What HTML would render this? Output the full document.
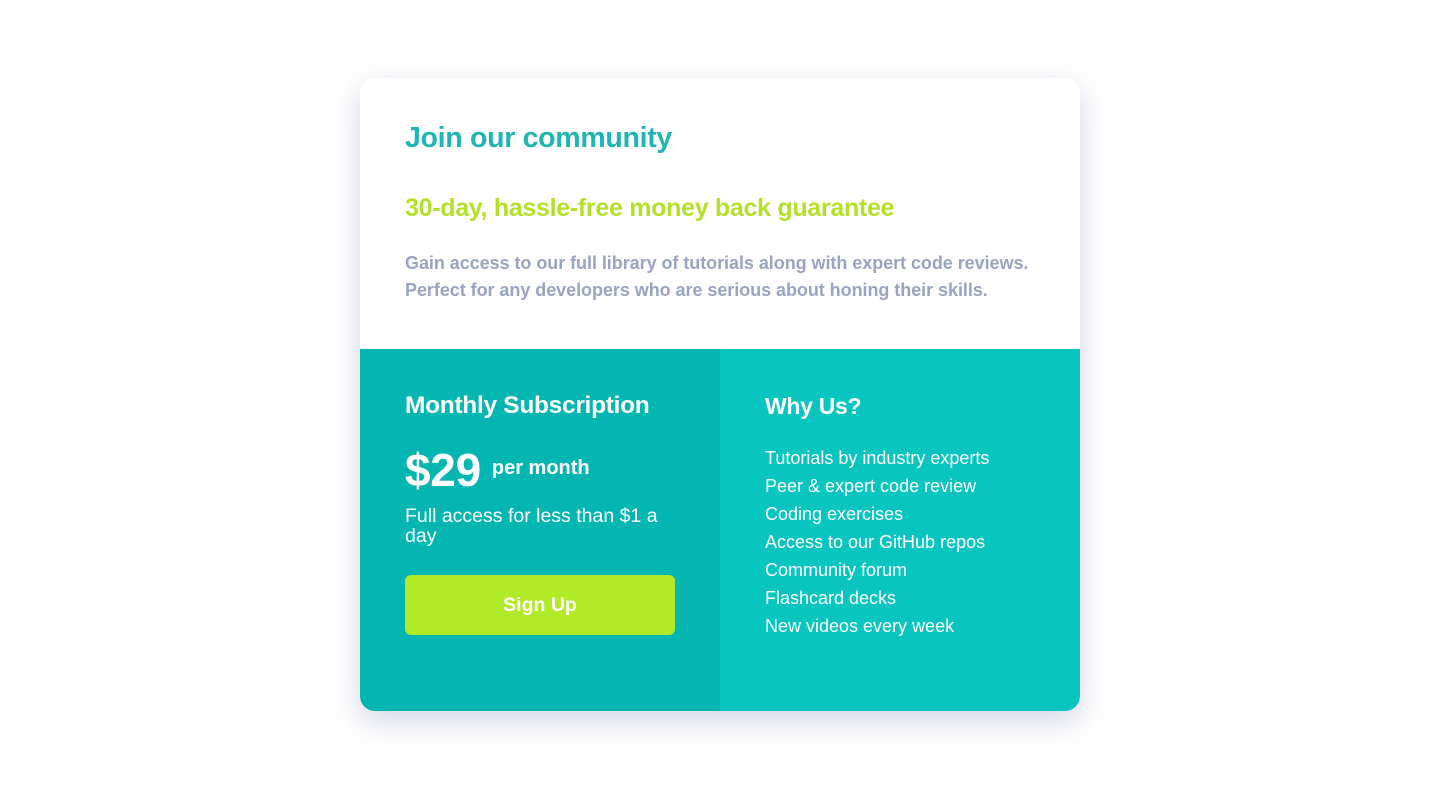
<!DOCTYPE html>
<html><head><meta charset="utf-8"><style>
*{margin:0;padding:0;box-sizing:border-box}
body{width:1440px;height:789px;background:#fff;font-family:"Liberation Sans",sans-serif;position:relative;overflow:hidden}
.card{position:absolute;left:360px;top:78px;width:720px;height:633px;border-radius:15px;overflow:hidden;box-shadow:0 10px 30px rgba(75,92,154,0.25);background:#fff}
.top{height:271px;padding:44px 45px 0}
h1{color:#1fb5b1;font-size:28.5px;font-weight:bold;letter-spacing:-0.3px;line-height:32px}
h2{color:#b2e128;font-size:25px;font-weight:bold;margin-top:40px;letter-spacing:-0.3px;line-height:28px}
p.d{color:#98a4c0;font-size:18px;font-weight:bold;line-height:27px;margin-top:28px;letter-spacing:-0.05px;white-space:nowrap}
.bot{display:flex;height:362px;color:#fff}
.l{width:360px;background:#03b6b1;padding:42px 45px}
.r{width:360px;background:#08c5c0;padding:42px 45px}
h3{font-size:24.5px;font-weight:bold;line-height:30px;letter-spacing:-0.3px}
.r h3{font-size:23px}
.price{margin-top:26px;display:flex;align-items:center;height:46px}
.price b{font-size:46px;letter-spacing:-0.3px;line-height:46px}
.price span{font-size:20px;font-weight:bold;margin-left:11px;margin-bottom:4px}
.fa{font-size:19.5px;line-height:20px;margin-top:13px;width:270px}
.btn{margin-top:29px;width:270px;height:60px;background:#b1ea26;border-radius:6px;display:flex;align-items:center;justify-content:center;font-weight:bold;font-size:19.5px}
ul{list-style:none;margin-top:23px;font-size:18px;line-height:28px}
</style></head><body>
<div class="card">
<div class="top">
<h1>Join our community</h1>
<h2>30-day, hassle-free money back guarantee</h2>
<p class="d">Gain access to our full library of tutorials along with expert code reviews.<br>Perfect for any developers who are serious about honing their skills.</p>
</div>
<div class="bot">
<div class="l">
<h3>Monthly Subscription</h3>
<div class="price"><b>$29</b><span>per month</span></div>
<div class="fa">Full access for less than $1 a day</div>
<div class="btn">Sign Up</div>
</div>
<div class="r">
<h3>Why Us?</h3>
<ul><li>Tutorials by industry experts</li><li>Peer &amp; expert code review</li><li>Coding exercises</li><li>Access to our GitHub repos</li><li>Community forum</li><li>Flashcard decks</li><li>New videos every week</li></ul>
</div>
</div>
</div>
</body></html>
